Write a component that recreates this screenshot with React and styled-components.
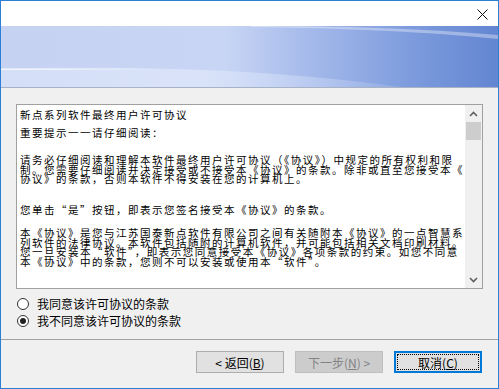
import React from 'react';
import styled, { createGlobalStyle } from 'styled-components';

const GlobalStyle = createGlobalStyle`
  html, body {
    margin: 0;
    padding: 0;
    background: #ffffff;
  }
  * {
    box-sizing: border-box;
  }
`;

const FONT = `"Noto Sans CJK SC", "Noto Sans", sans-serif`;

const agreement = [
  { gap: 0, lines: ['新点系列软件最终用户许可协议'] },
  { gap: 8.5, lines: ['重要提示一一请仔细阅读：'] },
  {
    gap: 17.5,
    lines: [
      '请务必仔细阅读和理解本软件最终用户许可协议（《协议》）中规定的所有权利和限',
      '制。您需要仔细阅读并决定接受或不接受本《协议》的条款。除非或直至您接受本《',
      '协议》的条款，否则本软件不得安装在您的计算机上。',
    ],
  },
  { gap: 21.5, lines: ['您单击“是”按钮，即表示您签名接受本《协议》的条款。'] },
  {
    gap: 13.5,
    lines: [
      '本《协议》是您与江苏国泰新点软件有限公司之间有关随附本《协议》的一点智慧系',
      '列软件的法律协议。本软件包括随附的计算机软件，并可能包括相关文档印刷材料。',
      '您一旦安装本“软件”，即表示您同意接受本《协议》各项条款的约束。如您不同意',
      '本《协议》中的条款，您则不可以安装或使用本“软件”。',
    ],
  },
];

const Banner = () => (
  <BannerBox>
    <svg width="497" height="61" viewBox="0 0 497 61" preserveAspectRatio="none">
      <defs>
        <linearGradient id="bg" x1="0" y1="0" x2="1" y2="0">
          <stop offset="0" stopColor="#c5d2f2" />
          <stop offset="0.45" stopColor="#c8d5f4" />
          <stop offset="0.6" stopColor="#a9bdec" />
          <stop offset="0.82" stopColor="#7e9cdd" />
          <stop offset="1" stopColor="#6386d2" />
        </linearGradient>
        <linearGradient id="band" x1="0" y1="0" x2="1" y2="0">
          <stop offset="0" stopColor="#d4def7" stopOpacity="1" />
          <stop offset="0.5" stopColor="#dbe4f9" stopOpacity="0.9" />
          <stop offset="1" stopColor="#c0d0f3" stopOpacity="0.2" />
        </linearGradient>
        <linearGradient id="hl" x1="0" y1="0" x2="1" y2="0">
          <stop offset="0" stopColor="#ffffff" stopOpacity="0.8" />
          <stop offset="1" stopColor="#ffffff" stopOpacity="0" />
        </linearGradient>
      </defs>
      <rect x="0" y="0" width="497" height="61" fill="url(#bg)" />
      <path d="M250,1 C340,2 430,6 497,13 L497,9 C430,3 340,0 250,0 Z" fill="#ffffff" opacity="0.35" />
      <path d="M0,43 C120,40 260,42 400,61 L0,61 Z" fill="url(#band)" />
      <rect x="0" y="42.5" width="160" height="1.5" fill="url(#hl)" />
    </svg>
  </BannerBox>
);

const Chevron = ({ down }) => (
  <svg width="9" height="6" viewBox="0 0 9 6">
    <path
      d={down ? 'M1,1 L4.5,4.5 L8,1' : 'M1,5 L4.5,1.5 L8,5'}
      fill="none"
      stroke="#606060"
      strokeWidth="1.6"
    />
  </svg>
);

const App = () => (
  <>
    <GlobalStyle />
    <Window>
      <TitleBar>
        <Close>
          <svg width="11" height="11" viewBox="0 0 11 11">
            <path d="M0.5,0.5 L10.5,10.5 M10.5,0.5 L0.5,10.5" stroke="#111" strokeWidth="1" />
          </svg>
        </Close>
      </TitleBar>
      <Banner />
      <Body>
        <TextBox>
          <TextContent>
            {agreement.map((p, i) => (
              <Para key={i} $gap={p.gap}>
                {p.lines.map((l, j) => (
                  <Line key={j}>{l}</Line>
                ))}
              </Para>
            ))}
          </TextContent>
          <ScrollBar>
            <Arrow>
              <Chevron />
            </Arrow>
            <Thumb />
            <Track />
            <Arrow>
              <Chevron down />
            </Arrow>
          </ScrollBar>
        </TextBox>
        <Radios>
          <RadioRow>
            <Radio />
            <span>我同意该许可协议的条款</span>
          </RadioRow>
          <RadioRow>
            <Radio $checked />
            <span>我不同意该许可协议的条款</span>
          </RadioRow>
        </Radios>
      </Body>
      <Footer>
        <Button>
          &lt; 返回(<u>B</u>)
        </Button>
        <Button $disabled>
          下一步(<u>N</u>) &gt;
        </Button>
        <Button $primary>
          <Focus>
            取消(<u>C</u>)
          </Focus>
        </Button>
      </Footer>
    </Window>
  </>
);

export default App;

const Window = styled.div`
  width: 499px;
  height: 389px;
  border: 1px solid #2b7fd4;
  background: #f0f0f0;
  display: flex;
  flex-direction: column;
  font-family: ${FONT};
  font-size: 12px;
  color: #000;
`;

const TitleBar = styled.div`
  height: 25px;
  background: #ffffff;
  display: flex;
  justify-content: flex-end;
  align-items: center;
  padding-right: 10px;
`;

const Close = styled.div`
  width: 11px;
  height: 11px;
  display: flex;
  margin-top: 1px;
`;

const BannerBox = styled.div`
  height: 62px;
  border-bottom: 1px solid #a7b2c6;
  display: flex;
  overflow: hidden;
`;

const Body = styled.div`
  padding: 16px 15px 0 15px;
  display: flex;
  flex-direction: column;
`;

const TextBox = styled.div`
  height: 185px;
  border: 1px solid #a0a0a0;
  background: #ffffff;
  display: flex;
`;

const TextContent = styled.div`
  flex: 1;
  padding: 5.25px 0 0 3px;
  overflow: hidden;
  white-space: nowrap;
`;

const Para = styled.div`
  margin-top: ${(p) => p.$gap}px;
`;

const Line = styled.div`
  height: 9.5px;
  line-height: 9.5px;
  font-size: 10.5px;
  letter-spacing: 1.5px;
`;

const ScrollBar = styled.div`
  width: 17px;
  background: #f0f0f0;
  display: flex;
  flex-direction: column;
`;

const Arrow = styled.div`
  height: 17px;
  display: flex;
  align-items: center;
  justify-content: center;
`;

const Thumb = styled.div`
  height: 18px;
  margin: 0 1px;
  background: #cdcdcd;
`;

const Track = styled.div`
  flex: 1;
`;

const Radios = styled.div`
  display: flex;
  flex-direction: column;
  gap: 2px;
  padding: 7px 0 0 1px;
`;

const RadioRow = styled.div`
  height: 15px;
  display: flex;
  align-items: center;
  gap: 8px;
  font-size: 12px;
`;

const Radio = styled.span`
  width: 12px;
  height: 12px;
  border-radius: 50%;
  border: 1px solid #333333;
  background: #ffffff;
  display: flex;
  align-items: center;
  justify-content: center;

  &::after {
    content: '';
    display: ${(p) => (p.$checked ? 'block' : 'none')};
    width: 6px;
    height: 6px;
    border-radius: 50%;
    background: #222222;
  }
`;

const Footer = styled.div`
  margin-top: auto;
  height: 49px;
  border-top: 1px solid #a0a0a0;
  display: flex;
  justify-content: flex-end;
  gap: 11px;
  padding: 11px 16px 0 0;
`;

const Button = styled.div`
  width: 88px;
  height: 22px;
  display: flex;
  align-items: center;
  justify-content: center;
  font-size: 12px;
  background: ${(p) => (p.$disabled ? '#cccccc' : '#e1e1e1')};
  color: ${(p) => (p.$disabled ? '#838383' : '#000000')};
  border: ${(p) => (p.$primary ? '2px solid #0078d7' : p.$disabled ? '1px solid #bfbfbf' : '1px solid #adadad')};
  padding: ${(p) => (p.$primary ? '1px' : '0')};

  u {
    text-decoration: underline;
    text-underline-offset: 1px;
  }
`;

const Focus = styled.span`
  width: 100%;
  height: 100%;
  border: 1px dotted #000000;
  display: flex;
  align-items: center;
  justify-content: center;
`;
